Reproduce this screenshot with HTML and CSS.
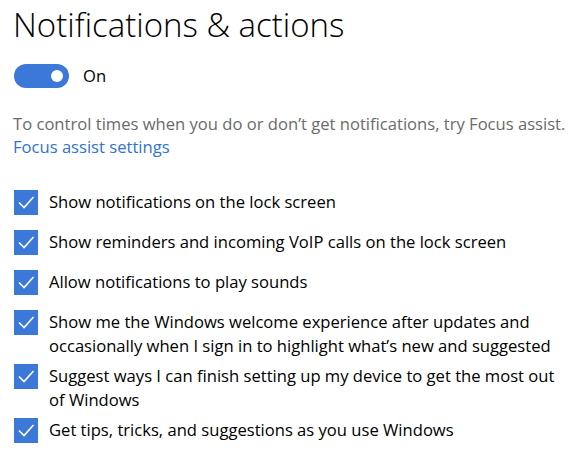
FILE: index.html
```html
<!DOCTYPE html>
<html lang="en">
<head>
    <meta charset="UTF-8">
    <meta name="viewport" content="width=device-width, initial-scale=1.0">
    <title>Notifications &amp; actions</title>
    <link rel="stylesheet" href="styles.css">
</head>
<body>
    <div class="pagina">
        <h1 class="titulo">Notifications &amp; actions</h1>

        <div class="linha-toggle">
            <span class="toggle"><span class="bolinha"></span></span>
            <span class="toggle-texto">On</span>
        </div>

        <p class="dica">
            To control times when you do or don’t get notifications, try Focus assist.<br>
            <a href="#" class="link">Focus assist settings</a>
        </p>

        <ul class="opcoes">
            <li class="opcao">
                <span class="caixa"><svg viewBox="0 0 24 25"><path d="M5 12.5 L10 17.5 L19.5 7"/></svg></span>
                <span class="rotulo">Show notifications on the lock screen</span>
            </li>
            <li class="opcao">
                <span class="caixa"><svg viewBox="0 0 24 25"><path d="M5 12.5 L10 17.5 L19.5 7"/></svg></span>
                <span class="rotulo">Show reminders and incoming VoIP calls on the lock screen</span>
            </li>
            <li class="opcao">
                <span class="caixa"><svg viewBox="0 0 24 25"><path d="M5 12.5 L10 17.5 L19.5 7"/></svg></span>
                <span class="rotulo">Allow notifications to play sounds</span>
            </li>
            <li class="opcao">
                <span class="caixa"><svg viewBox="0 0 24 25"><path d="M5 12.5 L10 17.5 L19.5 7"/></svg></span>
                <span class="rotulo">Show me the Windows welcome experience after updates and occasionally when I sign in to highlight what’s new and suggested</span>
            </li>
            <li class="opcao">
                <span class="caixa"><svg viewBox="0 0 24 25"><path d="M5 12.5 L10 17.5 L19.5 7"/></svg></span>
                <span class="rotulo">Suggest ways I can finish setting up my device to get the most out of Windows</span>
            </li>
            <li class="opcao">
                <span class="caixa"><svg viewBox="0 0 24 25"><path d="M5 12.5 L10 17.5 L19.5 7"/></svg></span>
                <span class="rotulo">Get tips, tricks, and suggestions as you use Windows</span>
            </li>
        </ul>
    </div>
</body>
</html>
```
FILE: styles.css
```css
body {
    margin: 0;
    background-color: #fff;
    font-family: "Open Sans", sans-serif;
    color: #000;
}
.pagina {
    padding: 3px 16px 0 13px;
}
.titulo {
    margin: 0;
    font-size: 33px;
    font-weight: 300;
    line-height: 44px;
}
.linha-toggle {
    display: flex;
    align-items: center;
    margin-top: 17px;
    height: 24px;
}
.toggle {
    display: flex;
    align-items: center;
    justify-content: flex-end;
    width: 55px;
    height: 24px;
    margin-left: 1px;
    padding-right: 6px;
    box-sizing: border-box;
    border-radius: 12px;
    background-color: #3b78d8;
}
.bolinha {
    width: 12px;
    height: 12px;
    border-radius: 50%;
    background-color: #fff;
}
.toggle-texto {
    margin-left: 14px;
    font-size: 16.6px;
    line-height: 24px;
}
.dica {
    margin: 24px 0 0;
    font-size: 16.6px;
    line-height: 23px;
    color: #6b6b6b;
}
.link {
    color: #2f73d0;
    text-decoration: none;
}
.opcoes {
    list-style: none;
    margin: 32px 0 0;
    padding: 0;
}
.opcao {
    display: flex;
    align-items: flex-start;
    min-height: 40px;
    padding-bottom: 6px;
    box-sizing: border-box;
}
.caixa {
    flex: none;
    width: 24px;
    height: 25px;
    margin-left: 1px;
    margin-right: 11px;
    background-color: #3b78d8;
}
.caixa svg {
    display: block;
    width: 24px;
    height: 25px;
    fill: none;
    stroke: #fff;
    stroke-width: 1.6;
}
.rotulo {
    font-size: 16.6px;
    line-height: 24px;
}
```
